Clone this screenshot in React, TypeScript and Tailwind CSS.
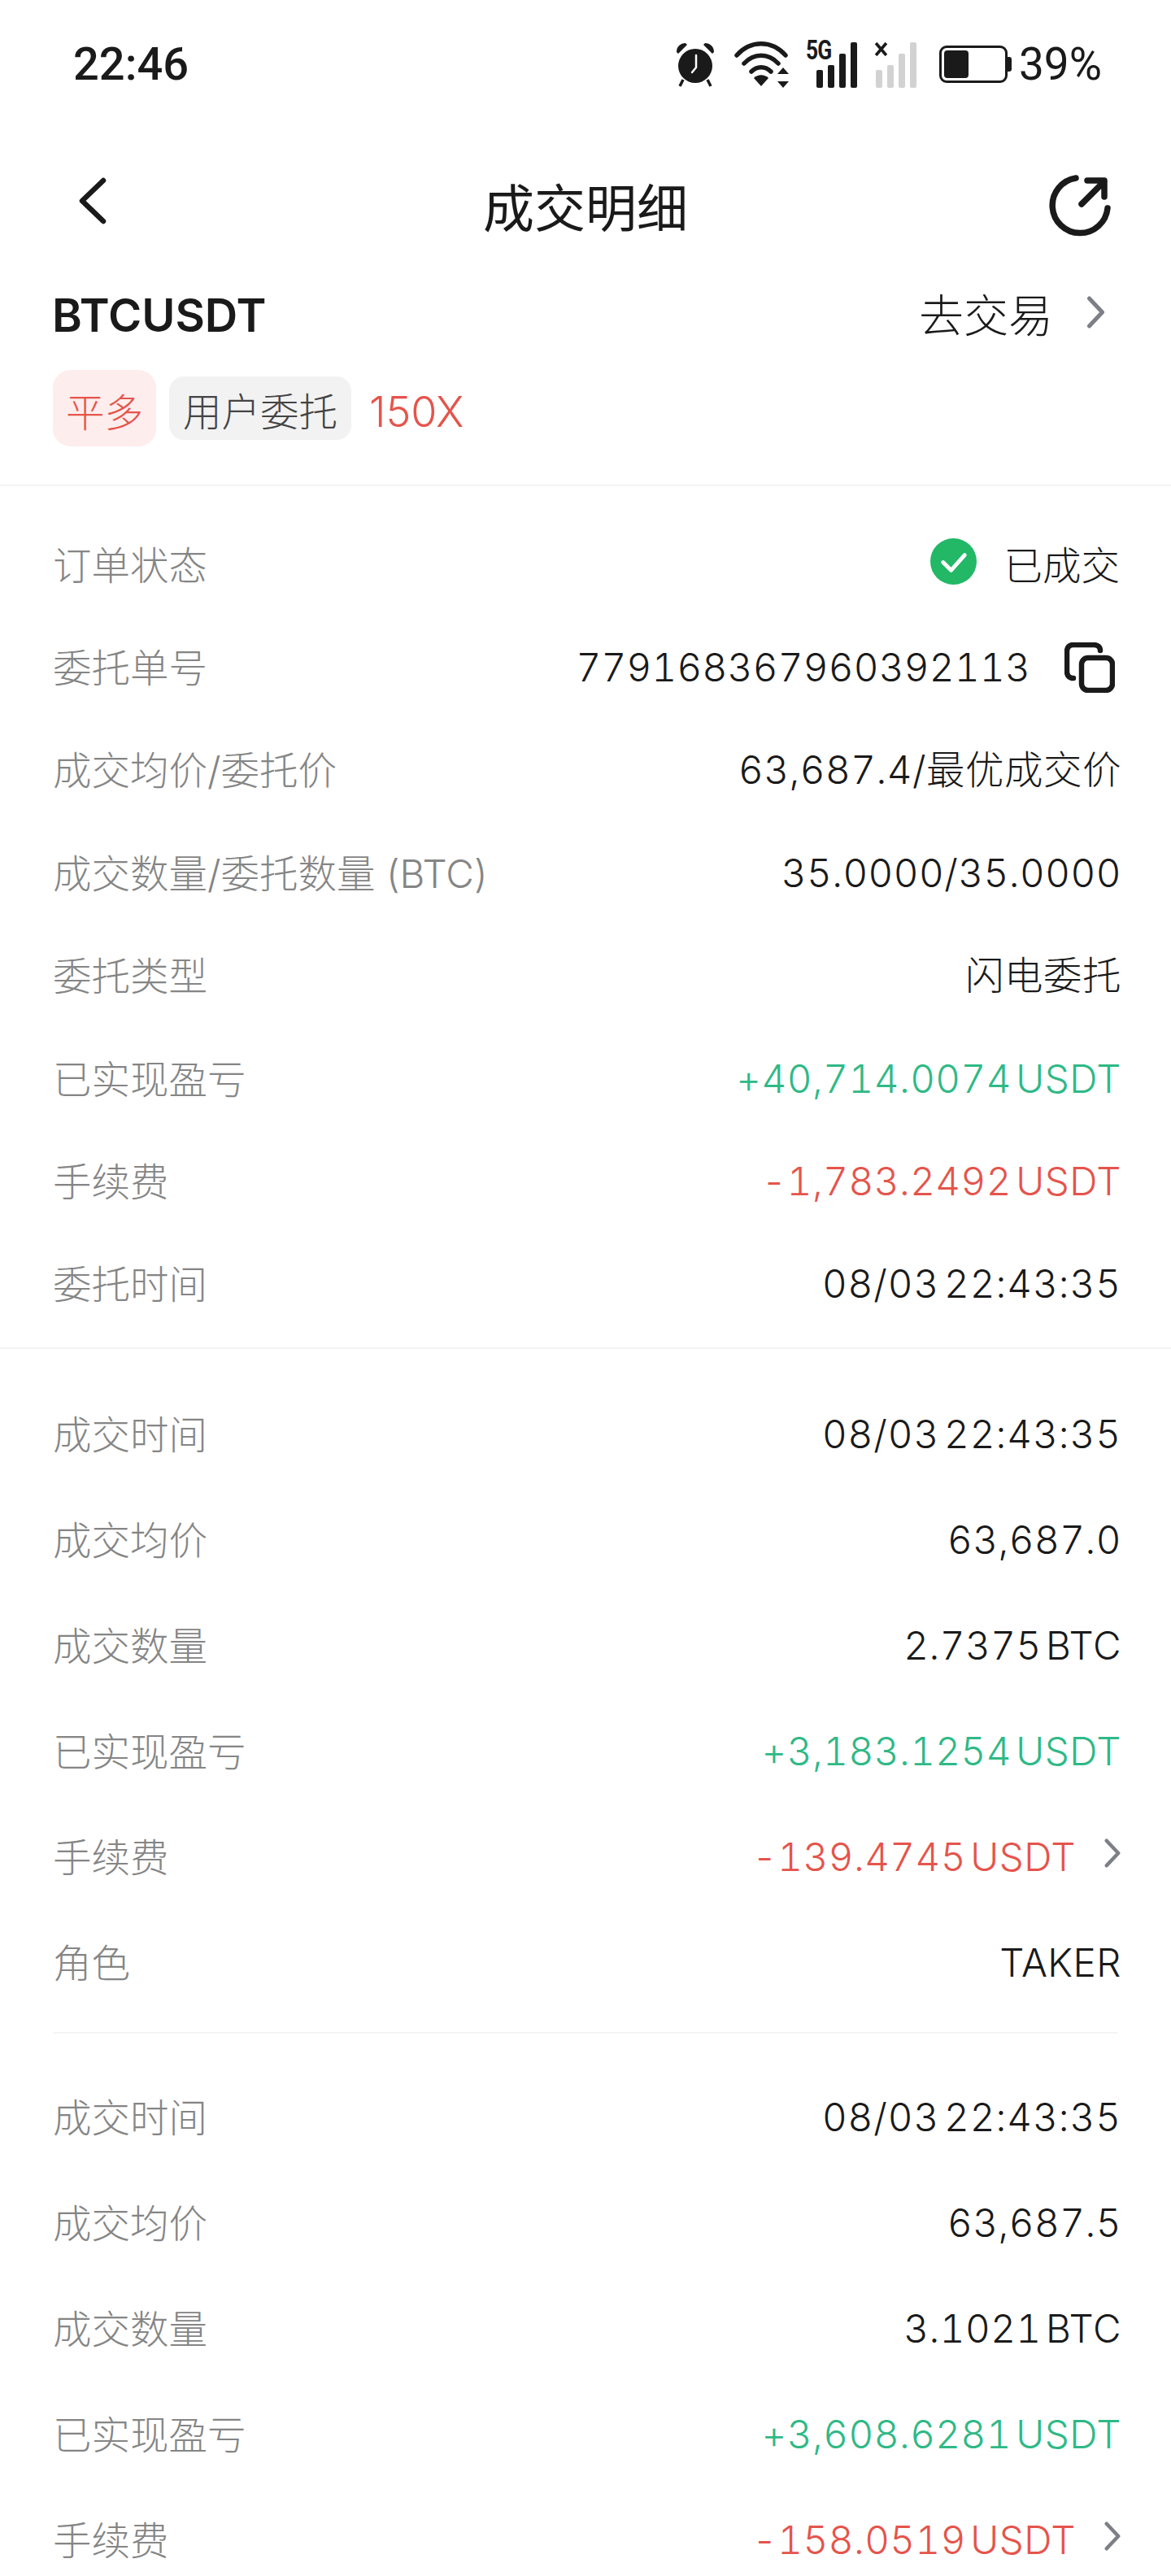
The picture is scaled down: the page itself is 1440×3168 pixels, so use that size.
import React from 'react'

type RowData = {
  label: string
  value: string
  color?: string
  arrow?: boolean
  time?: boolean
}

const orderRows: RowData[] = [
  { label: '成交均价/委托价', value: '63,687.4/最优成交价' },
  { label: '成交数量/委托数量 (BTC)', value: '35.0000/35.0000' },
  { label: '委托类型', value: '闪电委托' },
  { label: '已实现盈亏', value: '+40,714.0074 USDT', color: 'text-[#2fb986]' },
  { label: '手续费', value: '-1,783.2492 USDT', color: 'text-[#e5544b]' },
  { label: '委托时间', value: '08/03 22:43:35', time: true },
]

const fillA: RowData[] = [
  { label: '成交时间', value: '08/03 22:43:35', time: true },
  { label: '成交均价', value: '63,687.0' },
  { label: '成交数量', value: '2.7375 BTC' },
  { label: '已实现盈亏', value: '+3,183.1254 USDT', color: 'text-[#2fb986]' },
  { label: '手续费', value: '-139.4745 USDT', color: 'text-[#e5544b]', arrow: true },
  { label: '角色', value: 'TAKER' },
]

const fillB: RowData[] = [
  { label: '成交时间', value: '08/03 22:43:35', time: true },
  { label: '成交均价', value: '63,687.5' },
  { label: '成交数量', value: '3.1021 BTC' },
  { label: '已实现盈亏', value: '+3,608.6281 USDT', color: 'text-[#2fb986]' },
  { label: '手续费', value: '-158.0519 USDT', color: 'text-[#e5544b]', arrow: true },
]

function SmallChevron({ className }: { className: string }) {
  return (
    <svg viewBox="0 0 24 40" className={className} fill="none" stroke="#7d7f87" strokeWidth="5" strokeLinecap="round" strokeLinejoin="round">
      <path d="M4 3l16 17L4 37" />
    </svg>
  )
}

function Row({ row, tall }: { row: RowData; tall?: boolean }) {
  return (
    <div className={`flex items-center justify-between ${tall ? 'h-[130px]' : 'h-[126.4px]'}`}>
      <span className="text-[47.5px] text-[#858585]">{row.label}</span>
      <div className="flex items-center">
        <span className={`mb-[2px] text-[47.5px] tabular-nums [word-spacing:-8px] ${row.time ? 'tracking-[1px]' : 'tracking-[0.5px]'} ${row.color ?? 'text-[#1a1a1a]'}`}>{row.value}</span>
        {row.arrow && <SmallChevron className="w-[22px] h-[36px] ml-[34px] mb-[10px]" />}
      </div>
    </div>
  )
}

function StatusIcons() {
  return (
    <div className="flex items-center">
      {/* alarm */}
      <svg viewBox="0 0 50 56" className="w-[52px] h-[56px]">
        <circle cx="25" cy="30" r="21" fill="#1a1a1a" />
        <path d="M2 13C2 6 7 2 13 2L15 4 4 15z M48 13C48 6 43 2 37 2L35 4 46 15z" fill="#1a1a1a" />
        <path d="M10 47l-4 8M40 47l4 8" stroke="#1a1a1a" strokeWidth="3.5" />
        <path d="M26 17v15l-5 6" stroke="#fff" strokeWidth="2.5" fill="none" strokeLinecap="round" strokeLinejoin="round" />
      </svg>
      {/* wifi */}
      <svg viewBox="0 0 68 58" className="w-[68px] h-[58px] ml-[22px]">
        <g fill="none" stroke="#1a1a1a" strokeWidth="5.5" strokeLinecap="round">
          <path d="M3 18C20 -1 46 -1 63 18" />
          <path d="M12 28C24 15 42 15 54 28" />
          <path d="M21 38C28 31 38 31 45 38" />
        </g>
        <path d="M24 46c5-5 13-5 18 0L33 56z" fill="#1a1a1a" />
        <path d="M60 33l7 8H53zM60 58l7-8H53z" fill="#1a1a1a" />
      </svg>
      {/* 5G signal */}
      <div className="relative w-[63px] h-[58px] ml-[20px]">
        <span className="absolute left-0 top-[-5px] text-[33px] leading-[34px] font-bold text-[#1a1a1a] font-['Roboto'] tracking-[-1px] scale-x-[0.8] origin-left">5G</span>
        <div className="absolute left-[13px] bottom-0 flex items-end gap-[6px]">
          <div className="w-[8px] h-[22px] rounded-[2px] bg-[#1a1a1a]" />
          <div className="w-[8px] h-[28px] rounded-[2px] bg-[#1a1a1a]" />
          <div className="w-[8px] h-[42px] rounded-[2px] bg-[#1a1a1a]" />
          <div className="w-[8px] h-[56px] rounded-[2px] bg-[#1a1a1a]" />
        </div>
      </div>
      {/* no-sim signal */}
      <div className="relative w-[53px] h-[58px] ml-[21px]">
        <svg viewBox="0 0 16 16" className="absolute left-0 top-[2px] w-[17px] h-[17px]">
          <path d="M2 1l12 14M14 1L2 15" stroke="#1a1a1a" strokeWidth="3.5" />
        </svg>
        <div className="absolute left-[2px] bottom-0 flex items-end gap-[6px]">
          <div className="w-[8px] h-[22px] rounded-[2px] bg-[#d2d2d2]" />
          <div className="w-[8px] h-[28px] rounded-[2px] bg-[#d2d2d2]" />
          <div className="w-[8px] h-[42px] rounded-[2px] bg-[#d2d2d2]" />
          <div className="w-[8px] h-[56px] rounded-[2px] bg-[#d2d2d2]" />
        </div>
      </div>
      {/* battery */}
      <div className="flex items-center ml-[27px]">
        <div className="w-[84px] h-[46px] rounded-[9px] border-[3px] border-[#1a1a1a] p-[3px]">
          <div className="w-[30px] h-full rounded-[4px] bg-[#1a1a1a]" />
        </div>
        <div className="w-[5px] h-[18px] rounded-r-[3px] bg-[#1a1a1a]" />
      </div>
      <span className="ml-[9px] text-[55px] leading-none text-[#1a1a1a] font-['Roboto'] font-normal">39%</span>
    </div>
  )
}

export default function App() {
  return (
    <div className="w-[1440px] h-[3168px] overflow-hidden bg-white font-['Inter','Noto_Sans_CJK_SC',sans-serif] font-light">
      <div className="h-[158px] flex items-center justify-between pl-[90px] pr-[85px]">
        <span className="text-[56px] font-medium text-[#1a1a1a] font-['Roboto']">22:46</span>
        <StatusIcons />
      </div>

      <div className="relative h-[196px] flex items-center justify-center">
        <svg viewBox="0 0 38 58" className="absolute left-[95px] top-[60px] w-[38px] h-[58px]" fill="none" stroke="#1a1a1a" strokeWidth="6.5" strokeLinecap="round" strokeLinejoin="round">
          <path d="M32 4L6 29l26 25" />
        </svg>
        <span className="text-[63px] font-normal text-[#1a1a1a]">成交明细</span>
        <svg viewBox="0 0 76 76" className="absolute right-[74px] top-[57px] w-[76px] h-[76px]" fill="none" stroke="#1a1a1a" strokeWidth="7.5" strokeLinecap="round" strokeLinejoin="round">
          <path d="M33 4A34 34 0 1 0 72 41" />
          <path d="M40 36L68 8M47 7h21v20" />
        </svg>
      </div>

      <div className="h-[68px] flex items-center justify-between pl-[64px] pr-[78px]">
        <span className="text-[56px] font-semibold text-[#1a1a1a]">BTCUSDT</span>
        <div className="flex items-center">
          <span className="text-[55px] text-[#1a1a1a]">去交易</span>
          <SmallChevron className="w-[29px] h-[40px] ml-[38px] mb-[8px]" />
        </div>
      </div>

      <div className="mt-[33px] h-[94px] flex items-center pl-[65px]">
        <span className="h-[94px] w-[127px] pt-[12px] rounded-[22px] bg-[#fdeded] text-[#e5544b] text-[47.5px] flex items-center justify-center">平多</span>
        <span className="ml-[16px] h-[78px] w-[224px] pt-[10px] rounded-[18px] bg-[#f2f2f2] text-[#444444] text-[47.5px] flex items-center justify-center">用户委托</span>
        <span className="ml-[22px] pt-[10px] text-[52px] text-[#e5544b]">150X</span>
      </div>

      <div className="mt-[47px] border-t-2 border-[#f4f4f4]" />

      <section className="pl-[65px] pr-[61px] pt-[34px] pb-[14px] border-b-2 border-[#f4f4f4]">
        <div className="flex items-center justify-between h-[126.4px]">
          <span className="text-[47.5px] text-[#858585]">订单状态</span>
          <div className="flex items-center">
            <svg viewBox="0 0 58 58" className="w-[57px] h-[57px] mb-[10px]">
              <circle cx="29" cy="29" r="29" fill="#22b866" />
              <path d="M16 30l10 10 17-19" fill="none" stroke="#fff" strokeWidth="5" strokeLinecap="round" strokeLinejoin="round" />
            </svg>
            <span className="ml-[34px] mr-[2px] text-[47.5px] text-[#1a1a1a]">已成交</span>
          </div>
        </div>
        <div className="flex items-center justify-between h-[126.4px]">
          <span className="text-[47.5px] text-[#858585]">委托单号</span>
          <div className="flex items-center">
            <span className="mb-[2px] text-[47.5px] tabular-nums tracking-[0.3px] text-[#1a1a1a]">779168367960392113</span>
            <svg viewBox="0 0 62 62" className="w-[62px] h-[62px] ml-[42px] mr-[8px] mb-[2px]" fill="none" stroke="#1a1a1a" strokeWidth="6.5" strokeLinejoin="round" strokeLinecap="round">
              <rect x="21" y="19" width="38" height="40" rx="8" />
              <path d="M11 44C6 44 3 41 3 36V11C3 6 6 3 11 3H36C41 3 44 6 44 10" />
            </svg>
          </div>
        </div>
        {orderRows.map((row) => (
          <Row key={row.label} row={row} />
        ))}
      </section>

      <section className="pl-[65px] pr-[61px] pt-[40px]">
        {fillA.map((row) => (
          <Row key={row.label} row={row} tall />
        ))}
      </section>

      <div className="mx-[65px] mt-[20px] border-t-2 border-[#f4f4f4]" />

      <section className="pl-[65px] pr-[61px] pt-[38px]">
        {fillB.map((row) => (
          <Row key={row.label} row={row} tall />
        ))}
      </section>
    </div>
  )
}
